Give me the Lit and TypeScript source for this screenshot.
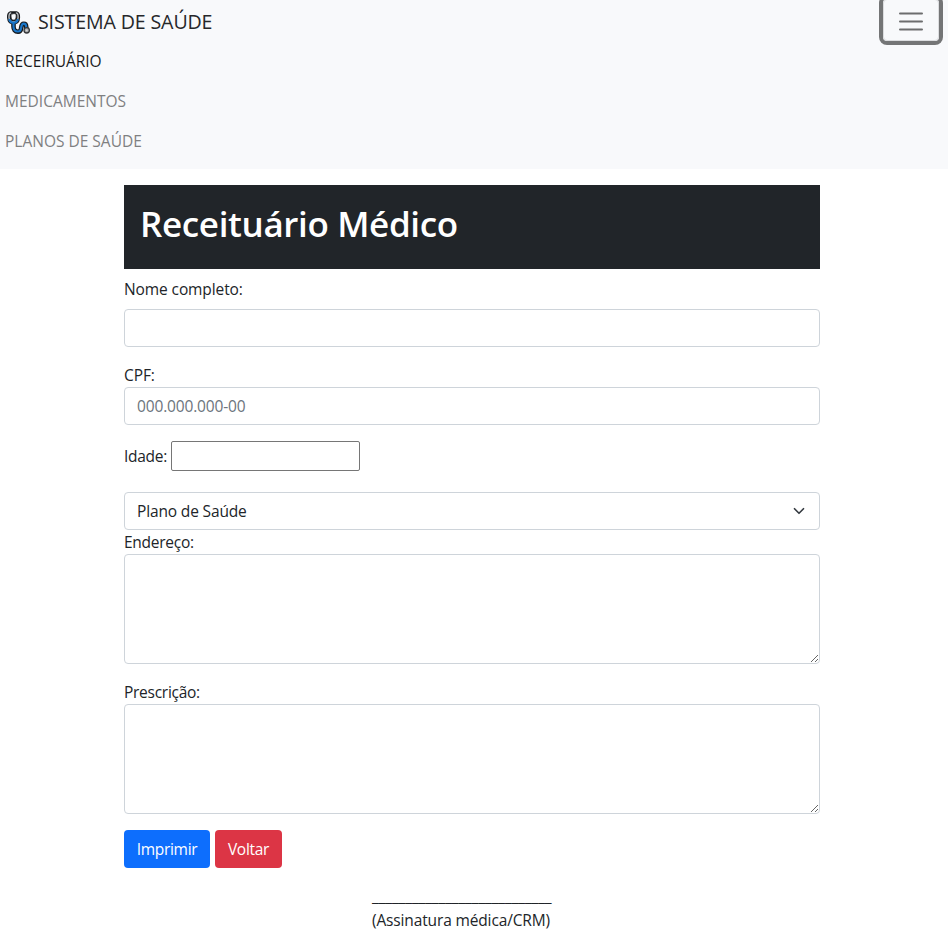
import { LitElement, html, css } from "lit";
import { customElement } from "lit/decorators.js";

@customElement("app-navbar")
export class AppNavbar extends LitElement {
  static styles = css`
    :host { display: block; height: 169px; box-sizing: border-box; background: #f8f9fb; overflow: hidden; }
    .top { display: flex; justify-content: space-between; height: 41px; }
    .brand { display: flex; align-items: center; gap: 7px; height: 44px; padding-left: 6px; color: #26272a; font-size: 19.6px; letter-spacing: -0.13px; white-space: nowrap; }
    .logo { width: 25px; height: 25px; display: block; }
    .toggler { width: 56px; height: 42px; margin: -1px 9px 0 0; padding: 1px 0 0; display: flex; align-items: center; justify-content: center; border: 1px solid #dcdddf; border-radius: 4px; background: transparent; box-shadow: 0 0 0 4px #747576; }
    .toggler svg { display: block; width: 30px; height: 30px; transform: translateY(0.5px); }
    .links { display: flex; flex-direction: column; padding-left: 5px; }
    .link { height: 40px; line-height: 41px; color: #7f8081; text-decoration: none; }
    .active { color: #1a1b1c; letter-spacing: -0.1px; }
  `;
  render() {
    return html`
      <div class="top">
        <div class="brand">
          <svg class="logo" viewBox="0 0 25 25" fill="none" stroke-linecap="round" stroke-linejoin="round">
            <path d="M7.500 13v3.500c0 3 1.500 5.200 4.500 5.200 5.300 0 1.300-8 5.800-8 3.500 0 1.800 3.200 2.700 5" stroke="#17191c" stroke-width="4.600"/>
            <path d="M4.600 2.800C2.400 3.200 2.500 5.500 2.600 7.500 2.800 11 4.500 13 7.500 13S12.400 11 12.500 7.500C12.600 5.500 12.600 3.200 10.400 2.800Z" fill="#17191c" stroke="#17191c" stroke-width="3.200"/>
            <path d="M4.700 2.900C2.900 3.300 2.900 5 3 7.500c.2 2.500 1.700 4.500 4.500 4.500s4.400-2 4.600-4.500c.1-2.500.1-4.200-1.700-4.600" stroke="#b5b9bd" stroke-width="1.500"/>
            <path d="M6.400 3.700h2.300c1.500 0 1.500 1.300 1.400 3.200-.1 2-1 3.100-2.500 3.100S5.200 8.900 5.100 6.900C5 5 5 3.700 6.400 3.700Z" fill="#f8f9fb" stroke="#303337" stroke-width="0.800"/>
            <path d="M3.400 10C4.300 12 5.500 12.800 7.500 12.800s3.400-.8 4.200-2.800M7.500 13v3.500c0 3 1.500 5 4.500 5 5.300 0 1.300-7.900 5.800-7.900 3.300 0 1.800 3 2.700 4.800" stroke="#1976c9" stroke-width="2.200"/>
            <circle cx="20.700" cy="20.300" r="2.700" fill="#a9abad" stroke="#35373a" stroke-width="1.300"/>
            <circle cx="20.700" cy="20.300" r="0.900" fill="#d8d9da"/>
          </svg>
          <span>SISTEMA DE SAÚDE</span>
        </div>
        <button class="toggler" aria-label="Menu">
          <svg viewBox="0 0 30 30"><path d="M4 7h22M4 15h22M4 23h22" stroke="#6c6d6e" stroke-width="2" stroke-linecap="round"/></svg>
        </button>
      </div>
      <nav class="links">
        <a class="link active">RECEIRUÁRIO</a>
        <a class="link">MEDICAMENTOS</a>
        <a class="link">PLANOS DE SAÚDE</a>
      </nav>
    `;
  }
}

@customElement("app-root")
export class AppRoot extends LitElement {
  static styles = css`
    :host { display: block; height: 939px; overflow: hidden; background: #fff; color: #212529; font: 400 15.5px/24px "Open Sans", "Noto Sans", sans-serif; }
    main { width: 696px; margin: 16px 0 0 124px; display: flex; flex-direction: column; }
    .banner { height: 84px; box-sizing: border-box; padding: 16px; background: #212529; color: #fff; }
    h1 { margin: 0; font-size: 35px; line-height: 46px; font-weight: 600; letter-spacing: -0.36px; white-space: nowrap; }
    .label { display: block; height: 24px; letter-spacing: -0.1px; white-space: nowrap; }
    .tight { letter-spacing: -0.27px; }
    .field { display: block; width: 100%; height: 38px; margin: 0; box-sizing: border-box; padding: 6px 12px; border: 1px solid #ced4da; border-radius: 4px; background: #fff; color: #212529; font: inherit; letter-spacing: -0.15px; outline: none; }
    .field::placeholder { color: #6c757d; opacity: 1; }
    .name { margin-top: 8px; }
    .name .field { margin-top: 8px; }
    .cpf { margin-top: 16px; }
    .age { display: flex; align-items: center; margin-top: 16px; height: 30px; }
    .age .label { width: 47px; }
    .age input { width: 189px; height: 30px; box-sizing: border-box; border: 1px solid #767676; border-radius: 2px; font: inherit; }
    .select { margin-top: 21px; display: flex; align-items: center; justify-content: space-between; }
    .select svg { width: 16px; height: 12px; display: block; }
    textarea.field { height: 110px; resize: vertical; }
    .rx { margin-top: 16px; }
    .actions { display: flex; gap: 5px; margin-top: 16px; }
    .btn { height: 38px; padding: 0; border: 0; border-radius: 4px; color: #fff; font: inherit; letter-spacing: -0.3px; }
    .primary { width: 86px; background: #0d6efd; }
    .danger { width: 67px; background: #dc3545; }
    .sign { margin: 16px 0 0 248px; white-space: nowrap; letter-spacing: -0.14px; }
  `;
  render() {
    return html`
      <app-navbar></app-navbar>
      <main>
        <header class="banner"><h1>Receituário Médico</h1></header>
        <div class="name">
          <label class="label">Nome completo:</label>
          <input class="field" type="text" />
        </div>
        <div class="cpf">
          <label class="label">CPF:</label>
          <input class="field" type="text" placeholder="000.000.000-00" />
        </div>
        <div class="age"><label class="label tight">Idade:</label><input type="text" /></div>
        <div class="field select">
          <span>Plano de Saúde</span>
          <svg viewBox="0 0 16 16"><path d="M2 5l6 6 6-6" fill="none" stroke="#343a40" stroke-width="2.200" stroke-linecap="round" stroke-linejoin="round"/></svg>
        </div>
        <label class="label tight">Endereço:</label>
        <textarea class="field"></textarea>
        <label class="label tight rx">Prescrição:</label>
        <textarea class="field"></textarea>
        <div class="actions">
          <button class="btn primary">Imprimir</button>
          <button class="btn danger">Voltar</button>
        </div>
        <div class="sign">
          <div>___________________________</div>
          <div>(Assinatura médica/CRM)</div>
        </div>
      </main>
    `;
  }
}
